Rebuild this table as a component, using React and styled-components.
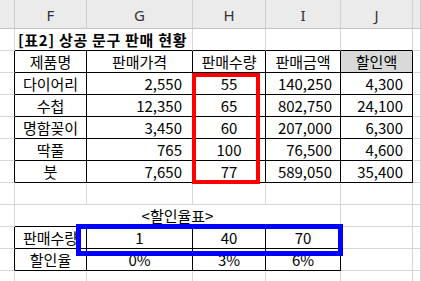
import React from 'react';
import styled, { createGlobalStyle, css } from 'styled-components';

const GlobalStyle = createGlobalStyle`
	html, body {
		margin: 0;
		padding: 0;
		background: #ffffff;
	}
	body {
		font-family: 'Noto Sans CJK KR', 'Noto Sans', sans-serif;
		overflow: hidden;
	}
`;

const Sheet = styled.div`
	position: relative;
	width: 421px;
	height: 281px;
	overflow: hidden;
	display: grid;
	grid-template-columns: 15px 72px 106px 73px 75px 72px 1fr;
	grid-template-rows: 29px;
	grid-auto-rows: 22px;
	color: #000;
	font-size: 15px;
`;

const ColHead = styled.div`
	box-sizing: border-box;
	background: #ebebeb;
	border-right: 1px solid #cfcfcf;
	border-bottom: 1px solid #c4c4c4;
	display: flex;
	align-items: center;
	justify-content: center;
	padding-top: 2px;
	font-family: 'Noto Sans', 'Liberation Sans', sans-serif;
	font-size: 15px;
	color: #333;
`;

const Cell = styled.div`
	box-sizing: border-box;
	border-right: 1px solid ${({ $rb }) => ($rb ? '#000' : '#d6d6d6')};
	border-bottom: 1px solid ${({ $bb }) => ($bb ? '#000' : '#d6d6d6')};
	background: ${({ $bg }) => $bg || 'transparent'};
	display: flex;
	align-items: center;
	white-space: nowrap;
	line-height: 1;
	justify-content: ${({ $align }) =>
		$align === 'right' ? 'flex-end' : $align === 'left' ? 'flex-start' : 'center'};
	padding-right: ${({ $pr }) => ($pr ? `${$pr}px` : 0)};
	padding-left: ${({ $pl }) => ($pl ? `${$pl}px` : 0)};
	${({ $span }) =>
		$span &&
		css`
			grid-column: span ${$span};
		`}
	${({ $bold }) =>
		$bold &&
		css`
			font-weight: bold;
			font-size: 15px;
			letter-spacing: 0.7px;
		`}
`;

const Mark = styled.div`
	position: absolute;
	box-sizing: border-box;
	pointer-events: none;
	left: ${({ $x }) => $x}px;
	top: ${({ $y }) => $y}px;
	width: ${({ $w }) => $w}px;
	height: ${({ $h }) => $h}px;
	border: ${({ $t }) => $t}px solid ${({ $color }) => $color};
`;

const letters = ['', 'F', 'G', 'H', 'I', 'J', ''];

const products = [
	['다이어리', '2,550', '55', '140,250', '4,300'],
	['수첩', '12,350', '65', '802,750', '24,100'],
	['명함꽂이', '3,450', '60', '207,000', '6,300'],
	['딱풀', '765', '100', '76,500', '4,600'],
	['붓', '7,650', '77', '589,050', '35,400'],
];

const discount = [
	['판매수량', '1', '40', '70'],
	['할인율', '0%', '3%', '6%'],
];

function Blank({ count = 1 }) {
	return Array.from({ length: count }, (_, i) => <Cell key={i} />);
}

export default function App() {
	return (
		<>
			<GlobalStyle />
			<Sheet>
				{letters.map((l, i) => (
					<ColHead key={i}>{l}</ColHead>
				))}

				{/* title row */}
				<Cell />
				<Cell $span={2} $bb $bold $align="left" $pl={3}>
					[표2] 상공 문구 판매 현황
				</Cell>
				<Cell $bb />
				<Cell $bb />
				<Cell $bb />
				<Cell />

				{/* table head */}
				<Cell $rb />
				<Cell $rb $bb>제품명</Cell>
				<Cell $rb $bb>판매가격</Cell>
				<Cell $rb $bb>판매수량</Cell>
				<Cell $rb $bb>판매금액</Cell>
				<Cell $rb $bb $bg="#d9d9d9">할인액</Cell>
				<Cell />

				{products.map(([name, price, qty, total, off]) => (
					<React.Fragment key={name}>
						<Cell $rb />
						<Cell $rb $bb>{name}</Cell>
						<Cell $rb $bb $align="right" $pr={10}>{price}</Cell>
						<Cell $rb $bb>{qty}</Cell>
						<Cell $rb $bb $align="right" $pr={8}>{total}</Cell>
						<Cell $rb $bb $align="right" $pr={9}>{off}</Cell>
						<Cell />
					</React.Fragment>
				))}

				<Blank count={7} />

				{/* discount table */}
				<Cell />
				<Cell $span={4} $bb>&lt;할인율표&gt;</Cell>
				<Cell />
				<Cell />

				{discount.map(([label, a, b, c]) => (
					<React.Fragment key={label}>
						<Cell $rb />
						<Cell $rb $bb>{label}</Cell>
						<Cell $rb $bb>{a}</Cell>
						<Cell $rb $bb>{b}</Cell>
						<Cell $rb $bb>{c}</Cell>
						<Cell />
						<Cell />
					</React.Fragment>
				))}

				<Blank count={7} />

				<Mark $x={192} $y={73} $w={68} $h={111} $t={4} $color="#ff0000" />
				<Mark $x={76} $y={224} $w={267} $h={32} $t={5} $color="#0000ff" />
			</Sheet>
		</>
	);
}
